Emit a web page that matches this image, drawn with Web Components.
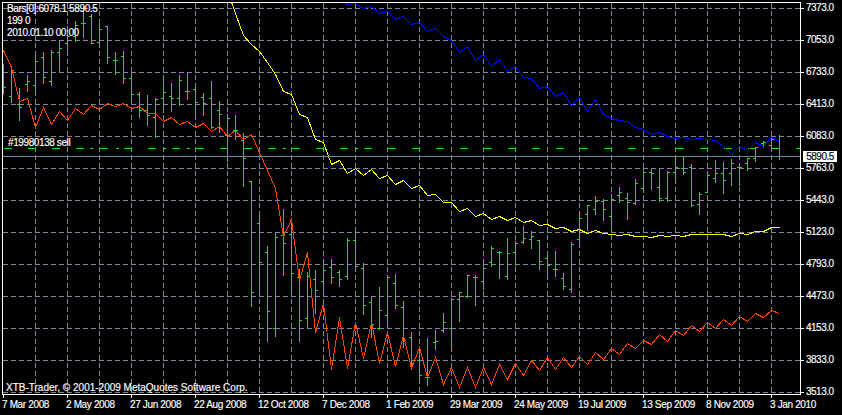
<!DOCTYPE html>
<html><head><meta charset="utf-8"><title>Chart</title>
<style>
html,body{margin:0;padding:0;background:#000;overflow:hidden}
body{font:10px "Liberation Sans",Arial,sans-serif;color:#fff}
</style></head>
<body>
<mt-chart>
  <mt-plot slot="plot"></mt-plot>
  <mt-price-axis slot="price" bid="5890.5"></mt-price-axis>
  <mt-time-axis slot="time"></mt-time-axis>
</mt-chart>
<script>
const BARS=[[64,93,87,87],[67,102,96,70],[88,120,104,107],[75,91,84,81],[55,95,85,61],[52,83,57,77],[50,85,81,52],[41,71,52,48],[26,53,43,36],[21,41,36,25],[5,37,23,23],[14,43,16,43],[24,47,42,29],[26,63,26,57],[52,74,60,60],[51,83,56,78],[73,103,78,94],[92,117,94,110],[95,125,110,115],[98,137,117,99],[78,112,98,92],[83,111,96,98],[75,105,98,80],[73,99,91,91],[87,117,89,102],[93,115,97,103],[81,128,98,127],[101,132,110,114],[114,161,135,118],[115,139,130,130],[133,186,140,158],
[181,306,181,292],[215,293,223,262],[246,341,252,311],[233,336,328,237],[209,275,235,243],[220,294,234,273],[269,341,277,320],[272,328,318,276],[270,313,279,290],[259,293,281,270],[259,283,267,277],[270,286,272,279],[238,279,276,240],[231,269,240,266],[263,314,268,305],
[297,337,302,324],[287,329,328,310],[275,324,315,277],[274,308,283,305],[301,347,307,340],[332,369,337,363],[347,383,360,375],[338,385,377,377],[330,349,342,341],[313,332,330,322],[298,347,328,299],[292,321,299,292],[275,297,296,275],[275,305,277,277],[259,289,281,268],[246,266,262,248],[251,278,252,252],
[238,279,276,253],[241,265,252,243],[226,243,242,238],[231,248,239,236],[240,269,240,261],[255,277,258,265],[251,276,269,269],[273,289,278,286],[242,292,289,244],[212,244,239,218],[205,230,214,205],[196,214,209,201],[199,220,201,209],[194,229,216,199],[187,202,195,192],[193,219,198,202],[179,204,203,183],[168,192,188,172],[169,189,172,173],[169,201,187,198],[171,201,198,172],[157,179,172,167],[157,174,168,172],[164,206,167,205],[192,214,204,194],[171,192,192,175],[160,182,178,173],[162,193,173,180],[159,185,173,163],[163,185,167,167],[158,170,163,158],[147,161,158,147],[141,147,143,142],[137,148,145,139],[135,159,148,156]];
const RED=[50,67,101,98,127,107,124,111,120,108,114,105,109,103,106,103,108,106,113,113,121,117,124,121,127,123,131,126,136,130,139,134,152,170,188,236,219,280,252,332,303,369,317,368,322,358,322,363,332,366,335,368,347,377,357,384,367,387,367,387,367,384,364,379,363,375,360,370,357,369,357,367,356,364,352,359,348,354,343,348,340,344,334,341,330,335,325,331,322,328,319,325,316,321,313,317,310,313];
const YEL=[[227,-10],[235,13],[243,35],[251,44],[259,51],[267,62],[275,74],[283,91],[291,94],[299,114],[307,117],[315,139],[323,142],[331,164],[339,160],[347,173],[355,168],[363,175],[371,169],[379,178],[387,175],[395,184],[403,180],[411,188],[419,185],[427,195],[435,194],[443,202],[451,202],[459,211],[467,208],[475,216],[483,213],[491,219],[499,216],[507,220],[515,217],[523,222],[531,220],[539,225],[547,224],[555,228],[563,227],[571,231],[579,229],[587,233],[595,230],[603,233],[611,234],[619,235],[627,234],[635,236],[643,236],[651,237],[659,235],[667,236],[675,235],[683,236],[691,234],[699,234],[707,234],[715,234],[723,234],[731,236],[739,233],[747,234],[755,231],[763,231],[771,227],[779,227]];
const BLU=[[345,3],[347,4],[355,3],[363,8],[371,6],[379,13],[387,11],[395,19],[403,16],[411,24],[419,22],[427,31],[435,28],[443,36],[451,40],[459,52],[467,46],[475,60],[483,54],[491,66],[499,59],[507,71],[515,66],[523,77],[531,78],[539,88],[547,86],[555,96],[563,92],[571,105],[579,97],[587,111],[595,99],[603,114],[611,118],[619,120],[627,121],[635,127],[643,129],[651,134],[659,132],[667,136],[675,138],[683,137],[691,139],[699,138],[707,139],[715,140],[723,146],[731,154],[739,146],[747,150],[755,142],[763,146],[771,137],[779,141]];

customElements.define('mt-chart',class extends HTMLElement{
  constructor(){super();this.attachShadow({mode:'open'}).innerHTML=`<style>
  :host{display:grid;grid-template-columns:801px 41px;grid-template-rows:395px 20px;width:842px;height:415px;background:#000;position:relative;overflow:hidden}
  .t{grid-column:1 / 3}
  </style><slot name="plot"></slot><slot name="price"></slot><div class="t"><slot name="time"></slot></div>`;}
});

customElements.define('mt-plot',class extends HTMLElement{
  constructor(){super();
    const p=v=>v+.5;
    let grid='';
    for(let y=8;y<=392;y+=32)grid+=`M3 ${p(y)}H800`;
    for(let x=35;x<=771;x+=32)grid+=`M${p(x)} 3V394`;
    let bars='';
    BARS.forEach((b,i)=>{const x=3+8*i;
      bars+=`M${p(x)} ${b[0]}V${b[1]+1}M${x-2} ${p(b[2])}H${x}M${x+1} ${p(b[3])}H${x+3}`;});
    const poly=a=>a.map(q=>p(q[0])+','+p(q[1])).join(' ');
    const red=RED.map((v,i)=>[3+8*i,v]);
    const dots=[90,116,163,187,283,355].map(x=>`M${x} 148.5h3`).join('');
    this.attachShadow({mode:'open'}).innerHTML=`<style>
    :host{display:block;position:relative;width:801px;height:395px;font:10px "Liberation Sans",Arial,sans-serif;color:#fff;-webkit-text-stroke:.15px #fff}
    svg{display:block}
    .info{position:absolute;left:7px;top:3px;line-height:12px;letter-spacing:-.38px;white-space:nowrap}
    .order{position:absolute;left:8px;top:137px;line-height:12px;letter-spacing:-.4px;white-space:nowrap}
    .copy{position:absolute;left:6px;top:382px;line-height:12px;white-space:nowrap}
    </style>
    <svg width="801" height="395" viewBox="0 0 801 395" shape-rendering="crispEdges" fill="none">
      <defs><clipPath id="c"><rect x="3" y="3" width="797" height="391"/></clipPath></defs>
      <g clip-path="url(#c)">
      <path d="${grid}" stroke="#778899" stroke-dasharray="5 3"/>
      <path d="M3 148.5H800" stroke="#1fe01f" stroke-dasharray="8 16" stroke-dashoffset="-1"/>
      <path d="${dots}" stroke="#1fe01f"/>
      <path d="${bars}" stroke="#1fe01f"/>
      <polyline points="${poly(YEL)}" stroke="#ffff00"/>
      <polyline points="${poly(BLU)}" stroke="#0000ff"/>
      <polyline points="${poly(red)}" stroke="#ff4500"/>
      <path d="M3 156.5H800" stroke="#778899"/>
      </g>
      <path d="M2.5 395V2.5H800.5V394.5H2" stroke="#fff"/>
    </svg>
    <div class="info">Bars[0]:6078.1 5890.5<br>199 0<br>2010.01.10 00:00</div>
    <div class="order">#19980138 sell</div>
    <div class="copy">XTB-Trader, © 2001-2009 MetaQuotes Software Corp.</div>`;
  }
});

customElements.define('mt-price-axis',class extends HTMLElement{
  constructor(){super();
    const v=['7373.0','7053.0','6733.0','6413.0','6083.0','5763.0','5443.0','5123.0','4793.0','4473.0','4153.0','3833.0','3513.0'];
    this.attachShadow({mode:'open'}).innerHTML=`<style>
    :host{display:flex;flex-direction:column;gap:22px;padding-top:3px;position:relative;font:10px "Liberation Sans",Arial,sans-serif;color:#fff;box-sizing:border-box;height:395px;-webkit-text-stroke:.15px #fff}
    .r{display:flex;align-items:center;height:10px;gap:2px;letter-spacing:-.5px;line-height:10px}
    .r i{display:block;width:3px;height:1px;background:#fff}
    .bid{position:absolute;left:2px;top:151px;width:34px;height:11px;background:#fff;color:#000;-webkit-text-stroke:.15px #000;line-height:11px;text-align:center;letter-spacing:-.5px}
    </style>${v.map(t=>`<div class="r"><i></i><span>${t}</span></div>`).join('')}<div class="bid">${this.getAttribute('bid')||'5890.5'}</div>`;
  }
});

customElements.define('mt-time-axis',class extends HTMLElement{
  constructor(){super();
    const v=['7 Mar 2008','2 May 2008','27 Jun 2008','22 Aug 2008','12 Oct 2008','7 Dec 2008','1 Feb 2009','29 Mar 2009','24 May 2009','19 Jul 2009','13 Sep 2009','8 Nov 2009','3 Jan 2010'];
    this.attachShadow({mode:'open'}).innerHTML=`<style>
    :host{display:flex;padding-left:3px;font:10px "Liberation Sans",Arial,sans-serif;color:#fff;height:20px;-webkit-text-stroke:.15px #fff}
    .c{width:64px;flex:none;display:flex;flex-direction:column;white-space:nowrap}
    .c i{display:block;width:1px;height:3px;background:#fff}
    .c span{margin:1px 0 0 -1px;line-height:12px;letter-spacing:-.35px}
    </style>${v.map(t=>`<div class="c"><i></i><span>${t}</span></div>`).join('')}`;
  }
});
</script>
</body></html>
